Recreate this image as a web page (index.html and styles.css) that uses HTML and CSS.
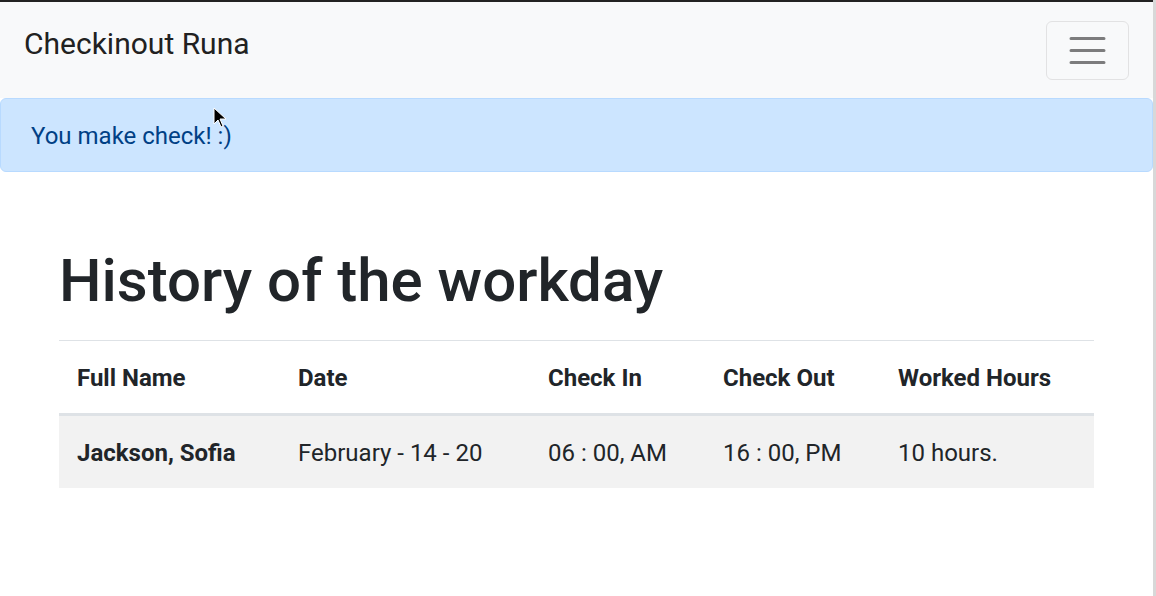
FILE: index.html
```html
<!DOCTYPE html>
<html lang="en">
<head>
<meta charset="utf-8">
<title>Checkinout Runa</title>
<link rel="stylesheet" href="styles.css">
</head>
<body>
<div class="page">
  <main class="main">
    <nav class="navbar">
      <span class="brand">Checkinout Runa</span>
      <button class="toggler" type="button" aria-label="Toggle navigation">
        <svg class="toggler-icon" viewBox="0 0 30 30" width="45" height="45">
          <path d="M4 7h22M4 15h22M4 23h22" stroke="rgba(0,0,0,0.5)" stroke-width="2" stroke-linecap="round" fill="none"/>
        </svg>
      </button>
    </nav>
    <div class="alert">You make check! :)</div>
    <div class="container">
      <h1 class="title">History of the workday</h1>
      <table class="table">
        <colgroup>
          <col class="c1"><col class="c2"><col class="c3"><col class="c4"><col class="c5">
        </colgroup>
        <thead>
          <tr><th>Full Name</th><th>Date</th><th>Check In</th><th>Check Out</th><th>Worked Hours</th></tr>
        </thead>
        <tbody>
          <tr class="striped"><th>Jackson, Sofia</th><td>February - 14 - 20</td><td>06 : 00, AM</td><td>16 : 00, PM</td><td>10 hours.</td></tr>
        </tbody>
      </table>
    </div>
  </main>
  <div class="edge"></div>
</div>
<svg class="cursor" width="14" height="22" viewBox="0 0 14 22">
  <path d="M1 1 L1 17 L5 13 L8 20 L10 19 L7 12 L13 12 Z" fill="#000" stroke="#fff" stroke-width="1"/>
</svg>
</body>
</html>
```

FILE: styles.css
```css
* { box-sizing: border-box; }
html, body { margin: 0; padding: 0; }
body {
  font-family: Roboto, "Liberation Sans", sans-serif;
  color: #212529;
  background: #fff;
  font-size: 24px;
  line-height: 1.5;
}
.page {
  display: flex;
  min-height: 596px;
}
.main {
  flex: 1;
  border-top: 2px solid #222222;
  min-width: 0;
}
.edge {
  width: 3px;
  background: #d8d8d8;
  flex: none;
}
.navbar {
  background: #f8f9fa;
  display: flex;
  justify-content: space-between;
  align-items: flex-start;
  padding: 19px 24px 18px 24px;
  height: 96px;
}
.brand {
  font-size: 30px;
  line-height: 45px;
  font-weight: 400;
  color: #212121;
}
.toggler {
  width: 83px;
  height: 59px;
  border: 1px solid #e2e2e3;
  border-radius: 6px;
  background: transparent;
  display: flex;
  align-items: center;
  justify-content: center;
  padding: 0;
}
.toggler-icon { display: block; }
.alert {
  background: #cce5ff;
  border: 1px solid #b8daff;
  border-radius: 6px;
  color: #004085;
  padding: 19px 30px 17px;
  line-height: 36px;
  height: 74px;
}
.container {
  width: 1080px;
  margin: 0 auto;
  padding: 73px 22.5px 0;
}
.title {
  font-size: 60px;
  font-weight: 500;
  line-height: 72px;
  margin: 0 0 23px 0;
  color: #212529;
}
.table {
  width: 100%;
  border-collapse: separate;
  border-spacing: 0;
  table-layout: fixed;
}
.c1 { width: 221px; }
.c2 { width: 250px; }
.c3 { width: 175px; }
.c4 { width: 175px; }
.c5 { width: 214px; }
.table th, .table td {
  text-align: left;
  padding: 19px 18px 17px;
  line-height: 36px;
  white-space: nowrap;
}
.table th { font-weight: 700; }
.table thead th {
  border-top: 1px solid #dee2e6;
  border-bottom: 3px solid #dee2e6;
}
.table td { font-weight: 400; }
.striped { background: #f2f2f2; }
.cursor {
  position: absolute;
  left: 213px;
  top: 107px;
}
```
